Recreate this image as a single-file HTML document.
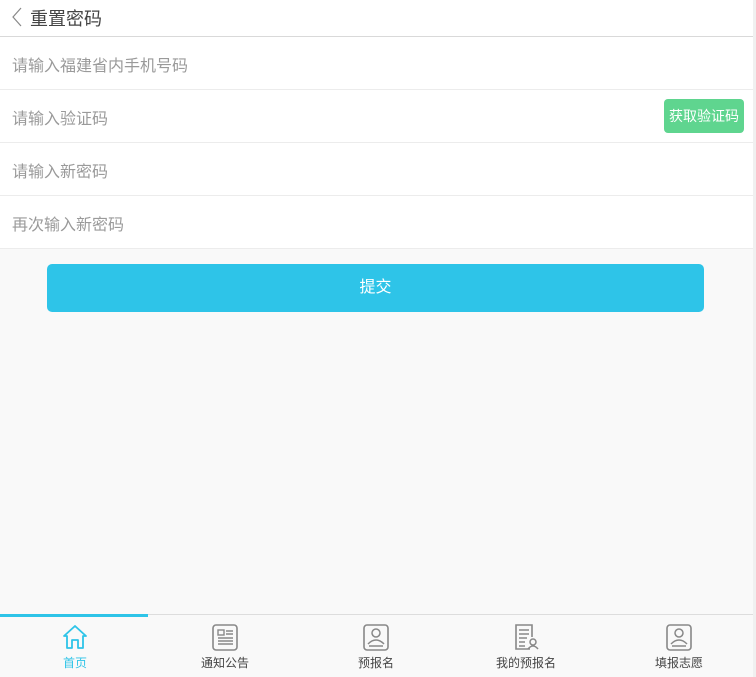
<!DOCTYPE html>
<html><head><meta charset="utf-8"><style>
*{margin:0;padding:0;box-sizing:border-box}
body{width:756px;height:677px;background:#f9f9f9;font-family:"Liberation Sans","Noto Sans CJK SC",sans-serif;position:relative;overflow:hidden}
.side{position:absolute;right:0;top:0;width:3px;height:677px;background:#f0f0f0}
.hd{position:absolute;left:0;top:0;width:753px;height:37px;background:#fff;border-bottom:1px solid #d9d9d9}
.hd span{position:absolute;left:30px;top:5px;font-size:18px;color:#444}
.row{position:absolute;left:0;width:753px;height:53px;background:#fff;border-bottom:1px solid #ececec}
.row span{position:absolute;left:12px;top:15px;font-size:16px;color:#9a9a9a}
.code{position:absolute;left:664px;top:9px;width:80px;height:34px;background:#5fd58f;border-radius:4px;color:#fff;font-size:14px;text-align:center;line-height:34px}
.btn{position:absolute;left:47px;top:264px;width:657px;height:48px;background:#2ec4e8;border-radius:5px;color:#fff;font-size:16px;text-align:center;line-height:48px}
.nav{position:absolute;left:0;top:614px;width:753px;height:63px;background:#f9f9f9;border-top:1px solid #ddd}
.ind{position:absolute;left:0;top:-1px;width:148px;height:3px;background:#2ec4e8}
.it{position:absolute;top:0;width:150px;text-align:center}
.it svg{position:absolute;top:8px;left:61px}
.it span{position:absolute;top:39px;left:0;width:150px;font-size:12px;color:#444}
</style></head><body>
<div class="side"></div>
<div class="hd"><svg style="position:absolute;left:11px;top:7px" width="12" height="20" viewBox="0 0 12 20"><path d="M10 1 L2 10 L10 19" fill="none" stroke="#888" stroke-width="1.2"/></svg><span>重置密码</span></div>
<div class="row" style="top:37px"><span>请输入福建省内手机号码</span></div>
<div class="row" style="top:90px"><span>请输入验证码</span><div class="code">获取验证码</div></div>
<div class="row" style="top:143px"><span>请输入新密码</span></div>
<div class="row" style="top:196px"><span>再次输入新密码</span></div>
<div class="btn">提交</div>
<div class="nav"><div class="ind"></div>
<div class="it" style="left:0"><svg width="28" height="28" viewBox="0 0 28 28"><path d="M3 13 L14 3 L25 13 L22 13 L22 25 L17 25 L17 17 L11 17 L11 25 L6 25 L6 13 Z" fill="none" stroke="#2ec4e8" stroke-width="1.8" stroke-linejoin="round"/></svg><span style="color:#2ec4e8">首页</span></div>
<div class="it" style="left:150px"><svg width="28" height="28" viewBox="0 0 28 28"><rect x="2" y="2" width="24" height="25" rx="3" fill="none" stroke="#888" stroke-width="1.6"/><rect x="7" y="7" width="6" height="5" fill="none" stroke="#888" stroke-width="1.4"/><path d="M15 8h7M15 11h7M7 15h15M7 18h15M7 21h15" stroke="#888" stroke-width="1.4"/></svg><span>通知公告</span></div>
<div class="it" style="left:301px"><svg width="28" height="28" viewBox="0 0 28 28"><rect x="2" y="2" width="24" height="25" rx="3" fill="none" stroke="#888" stroke-width="1.6"/><circle cx="14" cy="10" r="4" fill="none" stroke="#888" stroke-width="1.5"/><path d="M6 21 Q14 13 22 21 M7 23h14" fill="none" stroke="#888" stroke-width="1.5"/></svg><span>预报名</span></div>
<div class="it" style="left:451px"><svg width="28" height="28" viewBox="0 0 28 28"><path d="M18 26 H4 V2 H20 V14" fill="none" stroke="#888" stroke-width="1.6"/><path d="M7 7h10M7 11h10M7 15h8M7 19h6M7 23h6" stroke="#888" stroke-width="1.4"/><circle cx="21" cy="19" r="3" fill="none" stroke="#888" stroke-width="1.5"/><path d="M16 26 Q21 20 26 26" fill="none" stroke="#888" stroke-width="1.5"/></svg><span>我的预报名</span></div>
<div class="it" style="left:604px"><svg width="28" height="28" viewBox="0 0 28 28"><rect x="2" y="2" width="24" height="25" rx="3" fill="none" stroke="#888" stroke-width="1.6"/><circle cx="14" cy="10" r="4" fill="none" stroke="#888" stroke-width="1.5"/><path d="M6 21 Q14 13 22 21 M7 23h14" fill="none" stroke="#888" stroke-width="1.5"/></svg><span>填报志愿</span></div>
</div>
</body></html>
